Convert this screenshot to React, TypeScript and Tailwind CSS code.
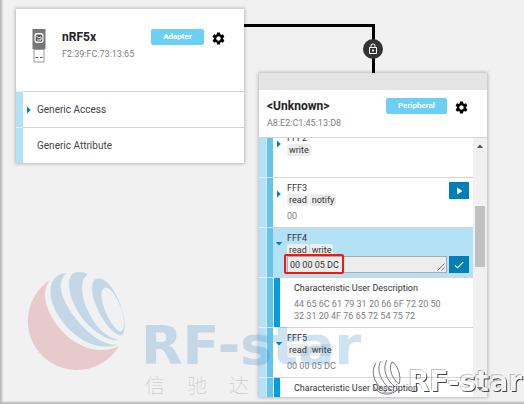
import type { ReactNode } from "react";
import { MdCheck, MdLockOutline, MdPlayArrow, MdSettings } from "react-icons/md";

const DEFAULT_FONT = "font-['Roboto','Liberation_Sans',sans-serif]";

interface CardHeaderProps {
  name: string;
  address: string;
  role: string;
  roleWidth: string;
  icon?: ReactNode;
}

function CardHeader({ name, address, role, roleWidth, icon }: CardHeaderProps) {
  return (
    <header className="flex items-start">
      {icon}
      <div className="flex-1">
        <h2 className="text-[12px] leading-4 font-bold text-[#222]">{name}</h2>
        <p className="mt-[3px] text-[9px] leading-3 text-[#808080]">{address}</p>
      </div>
      <button className={`${roleWidth} h-4 rounded-xs bg-[#6ccff6] text-[8px] leading-4 font-bold text-white`}>
        {role}
      </button>
      <button aria-label={`${name} settings`} className="mt-0.5 ml-[7px] text-black">
        <MdSettings className="size-[15px]" />
      </button>
    </header>
  );
}

function UsbDongle() {
  return (
    <svg viewBox="0 0 14 34" className="mr-4 h-[34px] w-3.5" aria-hidden="true">
      <rect x="0.5" width="13" height="20" fill="#777" />
      <rect x="2.5" y="4" width="9" height="10" rx="2.5" fill="#fff" />
      <rect x="3.7" y="5.4" width="6.6" height="7.2" rx="1.5" fill="#555" />
      <path d="M4.2 7 L7 9 L9 7.5 M5 11 H9 V8" fill="none" stroke="#fff" strokeWidth="0.9" />
      <rect x="2" y="20.5" width="10" height="12.5" fill="#fff" stroke="#999" />
      <path d="M3.5 28.5 h2.5 M8 28.5 h2.5" stroke="#555" strokeWidth="1.2" />
    </svg>
  );
}

function Arrow({ open }: { open: boolean }) {
  return (
    <svg viewBox="0 0 8 8" className="size-2" fill="#0080b7" aria-hidden="true">
      {open ? <path d="M0.8 2 H7.2 L4 5.6 Z" /> : <path d="M2 0.6 L5.8 4 L2 7.4 Z" />}
    </svg>
  );
}

function ServiceRow({ name, expandable }: { name: string; expandable?: boolean }) {
  return (
    <li className="flex h-9">
      <span className="w-[7px] border-t border-[#dff2fb] bg-[#b3e1f5]" />
      <button className="flex flex-1 items-center border-t border-[#d4d4d4] text-left text-[10px] leading-4 text-[#444]">
        <span className="w-3.5 pl-0.5">{expandable && <Arrow open={false} />}</span>
        {name}
      </button>
    </li>
  );
}

// Indentation bars on the left of a row: service, characteristic and, if any, descriptor
function Bars({ descriptor = false }: { descriptor?: boolean }) {
  return (
    <>
      <span className="w-[7px] border-b border-[#e2f4fb] bg-[#b3e1f5]" />
      <span className="w-px bg-[#d3eefa]" />
      <span className="w-1.5 border-b border-[#c4e8f8] bg-[#66c4ec]" />
      {descriptor && <span className="ml-px w-1.5 border-b border-[#e2f4fb] bg-[#009de0]" />}
    </>
  );
}

interface AttributeRowProps {
  title: string;
  properties: string[];
  open?: boolean;
  selected?: boolean;
  children?: ReactNode;
}

function AttributeRow({ title, properties, open = false, selected = false, children }: AttributeRowProps) {
  return (
    <li className="flex h-[50px]">
      <Bars />
      <div
        className={`relative flex flex-1 border-b border-[#d4d4d4] pt-1 ${selected ? "bg-[#b3e1f5]" : "bg-white"}`}
      >
        <button aria-label={`Toggle ${title}`} className="flex w-3.5 items-start pt-2 pl-0.5">
          <Arrow open={open} />
        </button>
        <div className="flex-1">
          <h3 className="text-[9px] leading-3 text-[#333]">{title}</h3>
          <div className="flex h-3 gap-px">
            {properties.map((p) => (
              <span key={p} className="rounded-xs bg-[#ededed] px-0.5 text-[9px] leading-3 text-[#333]">
                {p}
              </span>
            ))}
          </div>
          {children}
        </div>
      </div>
    </li>
  );
}

function DescriptorRow({ value }: { value?: string }) {
  return (
    <li className="flex h-[50px]">
      <Bars descriptor />
      <div className="flex-1 border-b border-[#d4d4d4] pt-1 pl-3.5">
        <h3 className="text-[9px] leading-3 text-[#333]">Characteristic User Description</h3>
        {value && <p className="mt-1 w-[148px] text-[9px] leading-3 text-[#808080]">{value}</p>}
      </div>
    </li>
  );
}

function Value({ children }: { children: ReactNode }) {
  return <p className="mt-1 text-[9px] leading-3 text-[#808080]">{children}</p>;
}

function Scrollbar() {
  return (
    <div className="flex w-3.5 flex-col items-center bg-[#f1f1f1] py-1" aria-hidden="true">
      <svg viewBox="0 0 8 8" className="size-2" fill="#505050">
        <path d="M1 6 L4 2.5 L7 6 Z" />
      </svg>
      <span className="mt-14 h-[61px] w-2.5 bg-[#c1c1c1]" />
      <svg viewBox="0 0 8 8" className="mt-auto size-2" fill="#505050">
        <path d="M1 2 L4 5.5 L7 2 Z" />
      </svg>
    </div>
  );
}

// Connector between the adapter and the peripheral, with its security badge
function Connection() {
  return (
    <div className="absolute top-6 left-[244px] h-[49px] w-[131px] border-t-3 border-r-3 border-black">
      <button
        aria-label="Connection security"
        className="absolute top-3 -right-[11px] flex size-5 items-center justify-center rounded-full bg-[#333] text-white"
      >
        <MdLockOutline className="size-3" />
      </button>
    </div>
  );
}

const STRIPES = [
  "M40.5 2.7 C31 2 23 10 23 20 C23 38 35 54 47 64 C62 77 80 80 93 74 C83 76 72 71 62 62 C48 50 35 31 34 17 C34 10 36 6 40.5 2.7 Z",
  "M61 4 C56 1 48 1 45 4 C39 10 42 24 46 33 C52 46 61 57 72 64 C80 70 88 72 94 69 C85 70 76 63 69 54 C60 42 53 24 56 11 C57 8 59 6 61 4 Z",
];
const RING =
  "M72 8 C64 8 63 19 67 31 C72 47 84 63 93 66 C99 66 99 52 96 42 C92 26 82 9 72 8 Z M79 18 C73 18 74 30 79 42 C84 54 91 62 94 61 C98 59 97 48 94 39 C90 28 84 18 79 18 Z";
const CRESCENT = "M23 10 A49 49 0 1 0 92 76 C77 84 57 80 41 67 C24 52 10 25 23 10 Z";

function Watermark() {
  return (
    <div className="pointer-events-none absolute top-[270px] left-[27px] flex items-start">
      <svg viewBox="0 0 102 102" className="size-[102px]" aria-hidden="true">
        <path d={CRESCENT} fill="#be1928" fillOpacity="0.18" />
        <g fill="#1e78be" fillOpacity="0.21" stroke="#fff" strokeOpacity="0.5" strokeWidth="0.8">
          {STRIPES.map((d) => (
            <path key={d} d={d} />
          ))}
          <path d={RING} fillRule="evenodd" />
        </g>
      </svg>
      <div className="mt-[49px] ml-3">
        <p className="font-['DejaVu_Sans',sans-serif] text-[54px] leading-[54px] font-bold text-[#1e78be]/21">
          RF-star
        </p>
        <p className="flex gap-[22px] pl-1 font-['Noto_Sans_CJK_SC',sans-serif] text-[20px] leading-6 font-light text-black/15">
          <span>信</span>
          <span>驰</span>
          <span>达</span>
        </p>
      </div>
    </div>
  );
}

function EmbossedMark() {
  return (
    <svg viewBox="0 0 154 46" className="pointer-events-none absolute right-0 bottom-0 h-[46px] w-[154px]">
      <defs>
        <filter id="emboss" x="0" y="0" width="154" height="46" filterUnits="userSpaceOnUse">
          <feOffset in="SourceAlpha" dx="1" dy="1" result="low" />
          <feComposite in="low" in2="SourceAlpha" operator="out" result="lowEdge" />
          <feFlood floodColor="#444" />
          <feComposite in2="lowEdge" operator="in" result="dark" />
          <feOffset in="SourceAlpha" dx="-1" dy="-1" result="high" />
          <feComposite in="high" in2="SourceAlpha" operator="out" result="highEdge" />
          <feFlood floodColor="#999" floodOpacity="0.6" />
          <feComposite in2="highEdge" operator="in" result="light" />
          <feFlood floodColor="#fff" floodOpacity="0.15" />
          <feComposite in2="SourceAlpha" operator="in" result="face" />
          <feMerge>
            <feMergeNode in="face" />
            <feMergeNode in="light" />
            <feMergeNode in="dark" />
          </feMerge>
        </filter>
      </defs>
      <g fill="none" stroke="#555" strokeWidth="0.8">
        <path d="M6 5 C0 14 4 26 16 34" />
        <path d="M11 3 C6 10 10 23 21 32" />
        <path d="M17 2 C12 10 16 22 25 29" />
        <path d="M22 4 C18 10 22 21 29 26 C32 18 27 6 22 4" />
        <path d="M3 27 C8 38 22 39 29 30" />
        <path d="M12 34 C19 36 26 34 29 29" stroke="#999" />
      </g>
      <text x="38" y="33" fontFamily="DejaVu Sans, sans-serif" fontSize="28" fontWeight="700" filter="url(#emboss)">
        RF-star
      </text>
    </svg>
  );
}

export default function App() {
  return (
    <main
      className={`relative flex min-h-screen items-start gap-[15px] overflow-hidden bg-[#f1f1f1] pt-[9px] pb-[7px] pl-4 shadow-[inset_2px_-2px_2px_#b8b8b8] ${DEFAULT_FONT}`}
    >
      <Connection />

      <section className="w-[228px] bg-white shadow-[0_0_3px_1px_#b9b9c4]">
        <div className="h-[82px] pt-5 pr-[18px] pl-4">
          <CardHeader
            name="nRF5x"
            address="F2:39:FC:73:13:65"
            role="Adapter"
            roleWidth="w-[53px]"
            icon={<UsbDongle />}
          />
        </div>
        <ul>
          <ServiceRow name="Generic Access" expandable />
          <ServiceRow name="Generic Attribute" />
        </ul>
      </section>

      <section className="mt-16 w-[228px] bg-white shadow-[0_0_3px_1px_#b9b9c4]">
        <div className="h-[17px] bg-[#e4e4e4]" />
        <div className="h-[47px] pt-2 pr-[18px] pl-2">
          <CardHeader name="<Unknown>" address="A8:E2:C1:45:13:D8" role="Peripheral" roleWidth="w-[61px]" />
        </div>
        <div className="flex h-[260px] overflow-hidden border-t border-[#d4d4d4]">
          <ul className="-mt-2.5 flex-1">
            <AttributeRow title="FFF2" properties={["write"]} />
            <AttributeRow title="FFF3" properties={["read", "notify"]}>
              <Value>00</Value>
              <button
                aria-label="Start notifications"
                className="absolute top-1 right-1 flex h-[17px] w-5 items-center justify-center bg-[#0080b7] text-white"
              >
                <MdPlayArrow className="size-3" />
              </button>
            </AttributeRow>
            <AttributeRow title="FFF4" properties={["read", "write"]} open selected>
              <div className="relative mr-1 flex gap-0.5">
                <textarea
                  aria-label="FFF4 value"
                  defaultValue="00 00 05 DC"
                  rows={1}
                  className="h-[17px] min-w-0 flex-1 resize-none overflow-hidden border border-[#aaa] bg-[#ededed] px-0.5 text-[9px] leading-4 text-[#333]"
                />
                <svg viewBox="0 0 8 8" className="absolute right-6 bottom-0.5 size-2" stroke="#777" aria-hidden="true">
                  <path d="M0.5 7.5 L7.5 0.5 M4.5 7.5 L7.5 4.5" />
                </svg>
                <button
                  aria-label="Write value"
                  className="flex h-[17px] w-5 items-center justify-center bg-[#0080b7] text-white"
                >
                  <MdCheck className="size-3" />
                </button>
                <span className="absolute -top-0.5 -left-[3px] h-5 w-[60px] rounded-xs border-2 border-[#f5160c]" />
              </div>
            </AttributeRow>
            <DescriptorRow value="44 65 6C 61 79 31 20 66 6F 72 20 50 32 31 20 4F 76 65 72 54 75 72" />
            <AttributeRow title="FFF5" properties={["read", "write"]} open>
              <Value>00 00 05 DC</Value>
            </AttributeRow>
            <DescriptorRow />
          </ul>
          <Scrollbar />
        </div>
      </section>

      <Watermark />
      <EmbossedMark />
    </main>
  );
}
